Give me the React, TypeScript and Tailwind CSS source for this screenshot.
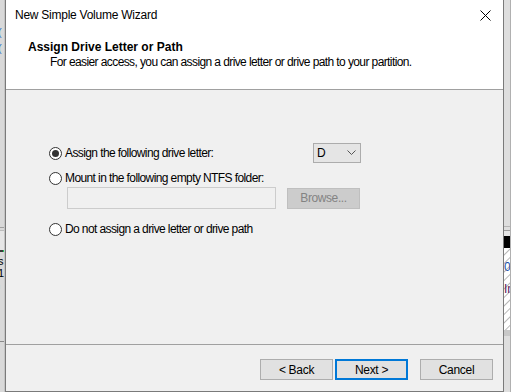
import React from 'react';

const font = { fontFamily: '"Segoe UI", "Liberation Sans", Arial, sans-serif' };

const Radio: React.FC<{ checked?: boolean; label: string }> = ({ checked, label }) => (
  <label className="flex items-center gap-[3px] text-[12px] text-black leading-[16px] tracking-[-0.6px]">
    <span className="w-[13px] h-[13px] rounded-full border border-[#333333] bg-white flex items-center justify-center">
      {checked && <span className="w-[7px] h-[7px] rounded-full bg-[#333333]" />}
    </span>
    <span>{label}</span>
  </label>
);

const Button: React.FC<{ label: string; focused?: boolean }> = ({ label, focused }) => (
  <button
    className={`w-[73px] h-[21px] text-[12px] tracking-[-0.3px] text-black bg-[#e1e1e1] flex items-center justify-center ${
      focused ? 'border-2 border-[#0078d7]' : 'border border-[#adadad]'
    }`}
  >
    {label}
  </button>
);

const App: React.FC = () => {
  return (
    <div className="flex w-[511px] h-[392px] overflow-hidden bg-[#f0f0f0]" style={font}>
      {/* window behind, left edge */}
      <div className="w-[5px] h-full bg-[#d9d9d9] flex flex-col overflow-hidden border-r border-[#c4c4c4]">
        <div className="h-[25px]" />
        <span className="text-[11px] leading-[14px] text-[#3377cc] -ml-[2px]">(</span>
        <span className="text-[11px] leading-[14px] text-[#3377cc] -ml-[2px] mt-[2px]">(</span>
        <div className="h-[172px]" />
        <div className="h-px bg-[#a0a0a0]" />
        <div className="h-[2px]" />
        <div className="h-px bg-[#bdbdbd]" />
        <div className="h-[19px] bg-[#e6e6e6]" />
        <div className="h-[2px] bg-[#3a3a3a] flex justify-end">
          <span className="w-px bg-[#22c55e]" />
        </div>
        <span className="text-[11px] leading-[11px] -ml-[8px] mt-[4px] text-black">as</span>
        <span className="text-[11px] leading-[11px] -ml-[8px] mt-[1px] text-black">31</span>
        <span className="text-[11px] leading-[11px] -ml-[6px] mt-[1px] text-black">n</span>
        <div className="h-[50px]" />
        <div className="h-px bg-[#8a8a8a]" />
      </div>

      {/* wizard dialog */}
      <div className="w-[499px] h-full flex flex-col border-l border-r border-b border-[#7a7a7a] bg-[#f0f0f0]">
        {/* title bar */}
        <div className="h-[30px] bg-white flex items-center justify-between pl-[9px] pr-[10px]">
          <span className="text-[12px] text-black tracking-[-0.25px]">New Simple Volume Wizard</span>
          <svg width="11" height="11" viewBox="0 0 11 11" className="mr-[2px]">
            <path d="M0.5 0.5 L10.5 10.5 M10.5 0.5 L0.5 10.5" stroke="#000" strokeWidth="1" />
          </svg>
        </div>

        {/* header */}
        <div className="h-[60px] bg-white border-b border-[#a0a0a0] flex flex-col pt-[10px]">
          <span className="ml-[22px] text-[12px] font-bold leading-[15px] text-black">
            Assign Drive Letter or Path
          </span>
          <span className="ml-[44px] text-[12px] leading-[15px] text-black tracking-[-0.6px]">
            For easier access, you can assign a drive letter or drive path to your partition.
          </span>
        </div>

        {/* body */}
        <div className="h-[254px] flex flex-col pl-[43px] pt-[53px]">
          <div className="flex items-center h-[20px]">
            <div className="w-[264px]">
              <Radio checked label="Assign the following drive letter:" />
            </div>
            <div className="w-[48px] h-[20px] bg-[#e5e5e5] border border-[#acacac] flex items-center justify-between pl-[3px] pr-[4px]">
              <span className="text-[12px] text-black">D</span>
              <svg width="9" height="6" viewBox="0 0 9 6">
                <path d="M0.5 0.5 L4.5 4.5 L8.5 0.5" fill="none" stroke="#555" strokeWidth="1" />
              </svg>
            </div>
          </div>
          <div className="mt-[7px]">
            <Radio label="Mount in the following empty NTFS folder:" />
          </div>
          <div className="flex items-center pl-[18px] mt-[1px]">
            <div className="w-[209px] h-[22px] bg-[#f0f0f0] border border-[#cccccc]" />
            <div className="ml-[11px] w-[73px] h-[21px] bg-[#cccccc] border border-[#bfbfbf] flex items-center justify-center text-[12px] tracking-[-0.4px] text-[#838383]">
              Browse...
            </div>
          </div>
          <div className="mt-[12px]">
            <Radio label="Do not assign a drive letter or drive path" />
          </div>
        </div>

        {/* footer */}
        <div className="flex-1 border-t border-[#a0a0a0] flex justify-end items-start pt-[14px] pr-[10px]">
          <Button label="< Back" />
          <div className="ml-[2px]">
            <Button label="Next >" focused />
          </div>
          <div className="ml-[12px]">
            <Button label="Cancel" />
          </div>
        </div>
      </div>

      {/* window behind, right edge */}
      <div className="w-[7px] h-full bg-[#dedede] flex flex-col overflow-hidden border-r border-[#b0b0b0]">
        <div className="h-[226px]" />
        <div className="h-px bg-[#b5b5b5]" />
        <div className="h-[3px]" />
        <div className="h-px bg-[#9a9a9a]" />
        <div className="h-[5px] bg-[#e5e5e5]" />
        <div className="h-[12px] bg-black" />
        <div className="h-[82px] bg-[repeating-linear-gradient(135deg,#ffffff_0px,#ffffff_4px,#b8b8b8_5px,#ffffff_6px)] flex flex-col">
          <span className="text-[12px] leading-[12px] mt-[13px] text-[#1a4fa8]">01</span>
          <span className="text-[12px] leading-[12px] mt-[10px] text-[#5a1a5a]">In</span>
        </div>
        <div className="h-[6px] bg-[#c8c8c8]" />
      </div>
    </div>
  );
};

export default App;
